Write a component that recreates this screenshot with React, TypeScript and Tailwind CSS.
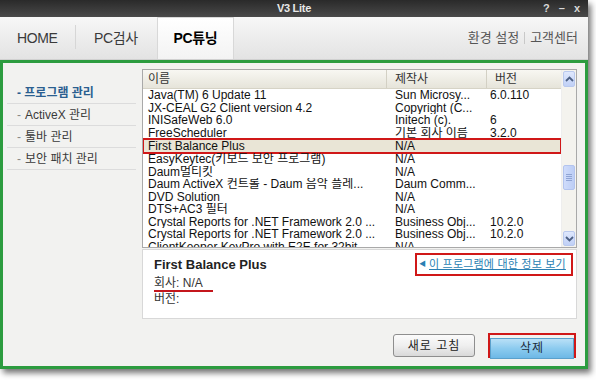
import React from 'react';

const font = { fontFamily: '"Liberation Sans", "Noto Sans CJK KR", sans-serif' };

const rows = [
  ['Java(TM) 6 Update 11', 'Sun Microsy...', '6.0.110'],
  ['JX-CEAL G2 Client version 4.2', 'Copyright (C...', ''],
  ['INISafeWeb 6.0', 'Initech (c).', '6'],
  ['FreeScheduler', '기본 회사 이름', '3.2.0'],
  ['First Balance Plus', 'N/A', ''],
  ['EasyKeytec(키보드 보안 프로그램)', 'N/A', ''],
  ['Daum멀티킷', 'N/A', ''],
  ['Daum ActiveX 컨트롤 - Daum 음악 플레...', 'Daum Comm...', ''],
  ['DVD Solution', 'N/A', ''],
  ['DTS+AC3 필터', 'N/A', ''],
  ['Crystal Reports for .NET Framework 2.0 ...', 'Business Obj...', '10.2.0'],
  ['Crystal Reports for .NET Framework 2.0 ...', 'Business Obj...', '10.2.0'],
  ['ClientKeeper KeyPro with E2E for 32bit', 'N/A', ''],
];

const menu = ['ActiveX 관리', '툴바 관리', '보안 패치 관리'];

function Chevron({ up }: { up?: boolean }) {
  return (
    <svg width="9" height="6" viewBox="0 0 9 6">
      <path d={up ? 'M1 5 L4.5 1.5 L8 5' : 'M1 1 L4.5 4.5 L8 1'} fill="none" stroke="#4d6185" strokeWidth="1.8" />
    </svg>
  );
}

export default function App() {
  return (
    <div className="w-[596px] h-[380px] bg-white overflow-hidden" style={font}>
      <div className="w-[588px] h-[369px] flex flex-col shadow-[3px_4px_6px_rgba(0,0,0,0.55)]">
        {/* title bar */}
        <div className="h-[17px] relative flex items-center justify-center bg-gradient-to-b from-[#2a2a2a] to-[#4a4a4a]">
          <span className="text-[11px] font-bold text-[#e8e8e8] tracking-tight">V3 Lite</span>
          <div className="absolute right-[8px] top-0 h-full flex items-center gap-[9px] text-[11px] font-bold text-[#d8d8d8]">
            <span>?</span>
            <span>–</span>
            <span>x</span>
          </div>
        </div>

        {/* tabs */}
        <div className="h-[43px] flex items-end bg-gradient-to-b from-[#f7f7f7] to-[#e3e3e3] border-b border-[#d0d0d0]">
          <div className="w-[75px] h-full flex items-center pl-[17px] text-[14px] text-[#3a3a3a] tracking-tight">HOME</div>
          <div className="w-px h-[24px] bg-[#d6d6d6] mb-[10px]" />
          <div className="w-[81px] h-full flex items-center pl-[18px] text-[14px] text-[#3a3a3a] tracking-tight">PC검사</div>
          <div className="w-[77px] h-[42px] flex items-center justify-center border border-b-0 border-[#d8d8d8] bg-gradient-to-b from-white to-[#f3f3f3] text-[14px] font-bold text-black tracking-tight">
            PC튜닝
          </div>
          <div className="ml-auto h-full flex items-center pr-[10px] text-[13px] text-[#555]">
            <span>환경 설정</span>
            <span className="w-px h-[12px] bg-[#c8c8c8] mx-[5px]" />
            <span>고객센터</span>
          </div>
        </div>

        {/* main frame */}
        <div className="flex-1 flex border-[3px] border-[#2c9c3f] bg-[#f2f2f0]">
          {/* sidebar */}
          <div className="w-[139px] shrink-0 pt-[19px] pl-[4px] pr-[6px]">
            <div className="h-[22px] flex items-center pl-[10px] border-b border-[#dcdcdc] text-[12px] font-bold text-[#2b5f90]">
              - 프로그램 관리
            </div>
            {menu.map((m) => (
              <div key={m} className="h-[22px] flex items-center pl-[10px] border-b border-[#dcdcdc] text-[12px] text-[#3a3a3a]">
                <span className="text-[#888] mr-[4px]">-</span>
                {m}
              </div>
            ))}
          </div>

          {/* right column */}
          <div className="w-[435px] shrink-0 pt-[6px] flex flex-col">
            {/* list */}
            <div className="h-[179px] border border-[#a9a9a9] bg-white flex">
              <div className="flex-1 flex flex-col overflow-hidden">
                <div className="h-[19px] shrink-0 grid grid-cols-[244px_100px_1fr] bg-gradient-to-b from-[#f8f7f2] to-[#e6e4da] border-b border-[#d6d3c6] text-[12px] text-[#333]">
                  <div className="pl-[5px] flex items-center border-r border-[#d3d0c4]">이름</div>
                  <div className="pl-[8px] flex items-center border-r border-[#d3d0c4]">제작사</div>
                  <div className="pl-[8px] flex items-center">버전</div>
                </div>
                {rows.map((r, i) => {
                  const sel = i === 4;
                  return (
                    <div
                      key={i}
                      className={
                        sel
                          ? 'shrink-0 h-[14px] grid grid-cols-[244px_100px_1fr] text-[12px] leading-[14px] text-[#111] bg-[#e9e5d6] outline-2 outline-[#d01818] -outline-offset-1'
                          : 'shrink-0 h-[12.5px] grid grid-cols-[244px_100px_1fr] text-[12px] leading-[12.5px] text-[#111] overflow-hidden'
                      }
                    >
                      <div className="pl-[5px] whitespace-nowrap overflow-hidden">{r[0]}</div>
                      <div className="pl-[8px] whitespace-nowrap overflow-hidden">{r[1]}</div>
                      <div className="pl-[3px] whitespace-nowrap">{r[2]}</div>
                    </div>
                  );
                })}
              </div>
              {/* scrollbar */}
              <div className="w-[15px] flex flex-col bg-[#f4f3ee] border-l border-[#eeeeee]">
                <div className="h-[16px] mt-[1px] mx-[1px] rounded-[2px] border border-[#b9c9ee] bg-gradient-to-b from-[#dfe8fd] to-[#c0d0f6] flex items-center justify-center">
                  <Chevron up />
                </div>
                <div className="flex-1 flex flex-col justify-center pt-[60px]">
                  <div className="h-[25px] mx-[1px] rounded-[2px] border border-[#b3c4ee] bg-gradient-to-r from-[#cfdcfb] to-[#bccdf5] flex flex-col items-center justify-center gap-[1px]">
                    <div className="w-[6px] h-px bg-[#8fa4d4]" />
                    <div className="w-[6px] h-px bg-[#8fa4d4]" />
                    <div className="w-[6px] h-px bg-[#8fa4d4]" />
                    <div className="w-[6px] h-px bg-[#8fa4d4]" />
                  </div>
                </div>
                <div className="h-[15px] mb-[1px] mx-[1px] mt-[24px] rounded-[2px] border border-[#b9c9ee] bg-gradient-to-b from-[#dfe8fd] to-[#c0d0f6] flex items-center justify-center">
                  <Chevron />
                </div>
              </div>
            </div>

            {/* details */}
            <div className="h-[70px] mt-px border border-[#d8d8d8] bg-white flex justify-between pl-[11px] pr-[3px] pt-[3px]">
              <div className="flex flex-col pt-[3px]">
                <div className="text-[13px] font-bold text-[#222] leading-[17px]">First Balance Plus</div>
                <div className="mt-[3px] text-[12px] text-[#333] leading-[15px]">
                  <span className="inline-block border-b-2 border-[#c4161c] pr-[10px] leading-[14px]">회사: N/A</span>
                </div>
                <div className="text-[12px] text-[#333] leading-[15px]">버전:</div>
              </div>
              <div className="w-[158px] h-[23px] border-2 border-[#d01818] flex items-center pl-[2px] whitespace-nowrap text-[11px] text-[#2a7fb3]">
                <span className="text-[7px] mr-[3px]">◀</span>
                <span className="underline tracking-[0.2px]">이 프로그램에 대한 정보 보기</span>
              </div>
            </div>

            {/* buttons */}
            <div className="mt-[14px] flex justify-end items-center gap-[13px] pr-[1px]">
              <button className="w-[82px] h-[23px] rounded-[3px] border border-[#8e8e8e] bg-gradient-to-b from-[#fbfbfb] via-[#efefef] to-[#d9d9d9] text-[12px] text-[#222] tracking-[1px]">
                새로 고침
              </button>
              <div className="w-[88px] h-[25px] border-2 border-[#d01818]">
                <button className="w-full h-full bg-gradient-to-b from-[#b9e0f7] via-[#8ccbef] to-[#6db8e6] border border-[#5aa0cc] text-[12px] text-[#1b2b3a] tracking-[1px]">
                  삭제
                </button>
              </div>
            </div>
          </div>
        </div>
      </div>
    </div>
  );
}
